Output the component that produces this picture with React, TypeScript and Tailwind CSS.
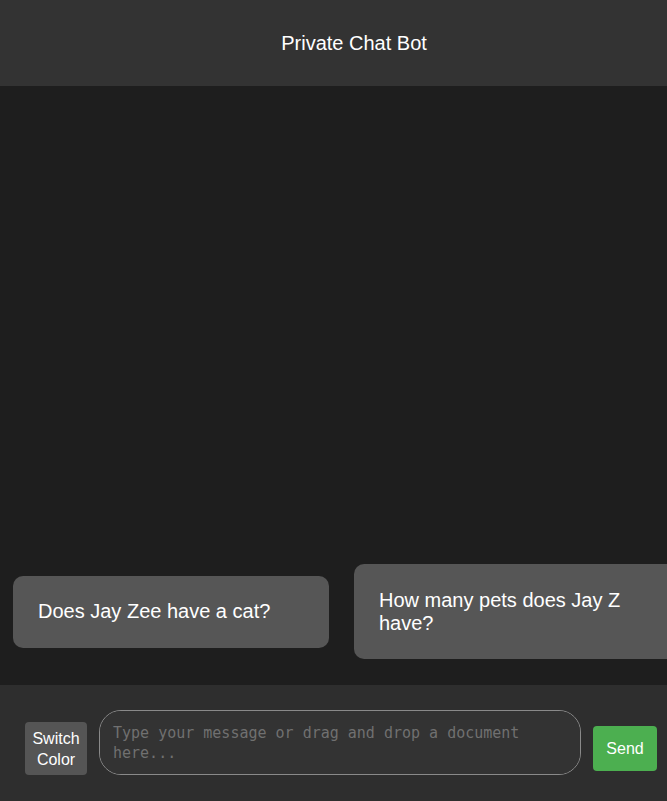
import React, { useState } from 'react';

const messages = [
  { id: 1, text: 'Does Jay Zee have a cat?', width: 'w-[316px]' },
  { id: 2, text: 'How many pets does Jay Z have?', width: 'w-[330px]' },
];

const App = () => {
  const [input, setInput] = useState('');

  return (
    <div className="h-[801px] flex flex-col bg-[#1e1e1e] font-['Liberation_Sans',Arial,sans-serif] text-white">
      {/* Header */}
      <header className="h-[86px] shrink-0 bg-[#333333] flex items-center justify-center pl-[41px]">
        <h1 className="text-[20px] font-normal">Private Chat Bot</h1>
      </header>

      {/* Chat area */}
      <main className="flex-1 flex flex-col justify-end overflow-hidden pb-[26px]">
        <div className="flex items-center gap-[25px] pl-[13px]">
          {messages.map((m) => (
            <div
              key={m.id}
              className={`${m.width} shrink-0 bg-[#565656] rounded-[10px] py-[24.5px] pl-[25px] pr-[20px] text-[20px] leading-[23px]`}
            >
              {m.text}
            </div>
          ))}
        </div>
      </main>

      {/* Input bar */}
      <footer className="h-[116px] shrink-0 bg-[#2e2e2e] flex items-center pl-[25px] pr-[10px] gap-[12px]">
        <button className="w-[62px] h-[53px] mt-[11px] shrink-0 bg-[#555555] rounded-[4px] text-[16px] leading-[21px] text-white">
          Switch
          <br />
          Color
        </button>
        <textarea
          value={input}
          onChange={(e) => setInput(e.target.value)}
          placeholder="Type your message or drag and drop a document here..."
          className="w-[482px] h-[65px] -mt-[1px] shrink-0 resize-none bg-[#333333] border border-[#8a8a8a] rounded-[22px] px-[13px] py-[12px] text-[15px] leading-[20px] font-['DejaVu_Sans_Mono',monospace] text-white placeholder:text-[#707070] outline-none"
        />
        <button className="w-[64px] h-[45px] mt-[11px] shrink-0 bg-[#4caf50] rounded-[4px] text-[16px] text-white">
          Send
        </button>
      </footer>
    </div>
  );
};

export default App;
